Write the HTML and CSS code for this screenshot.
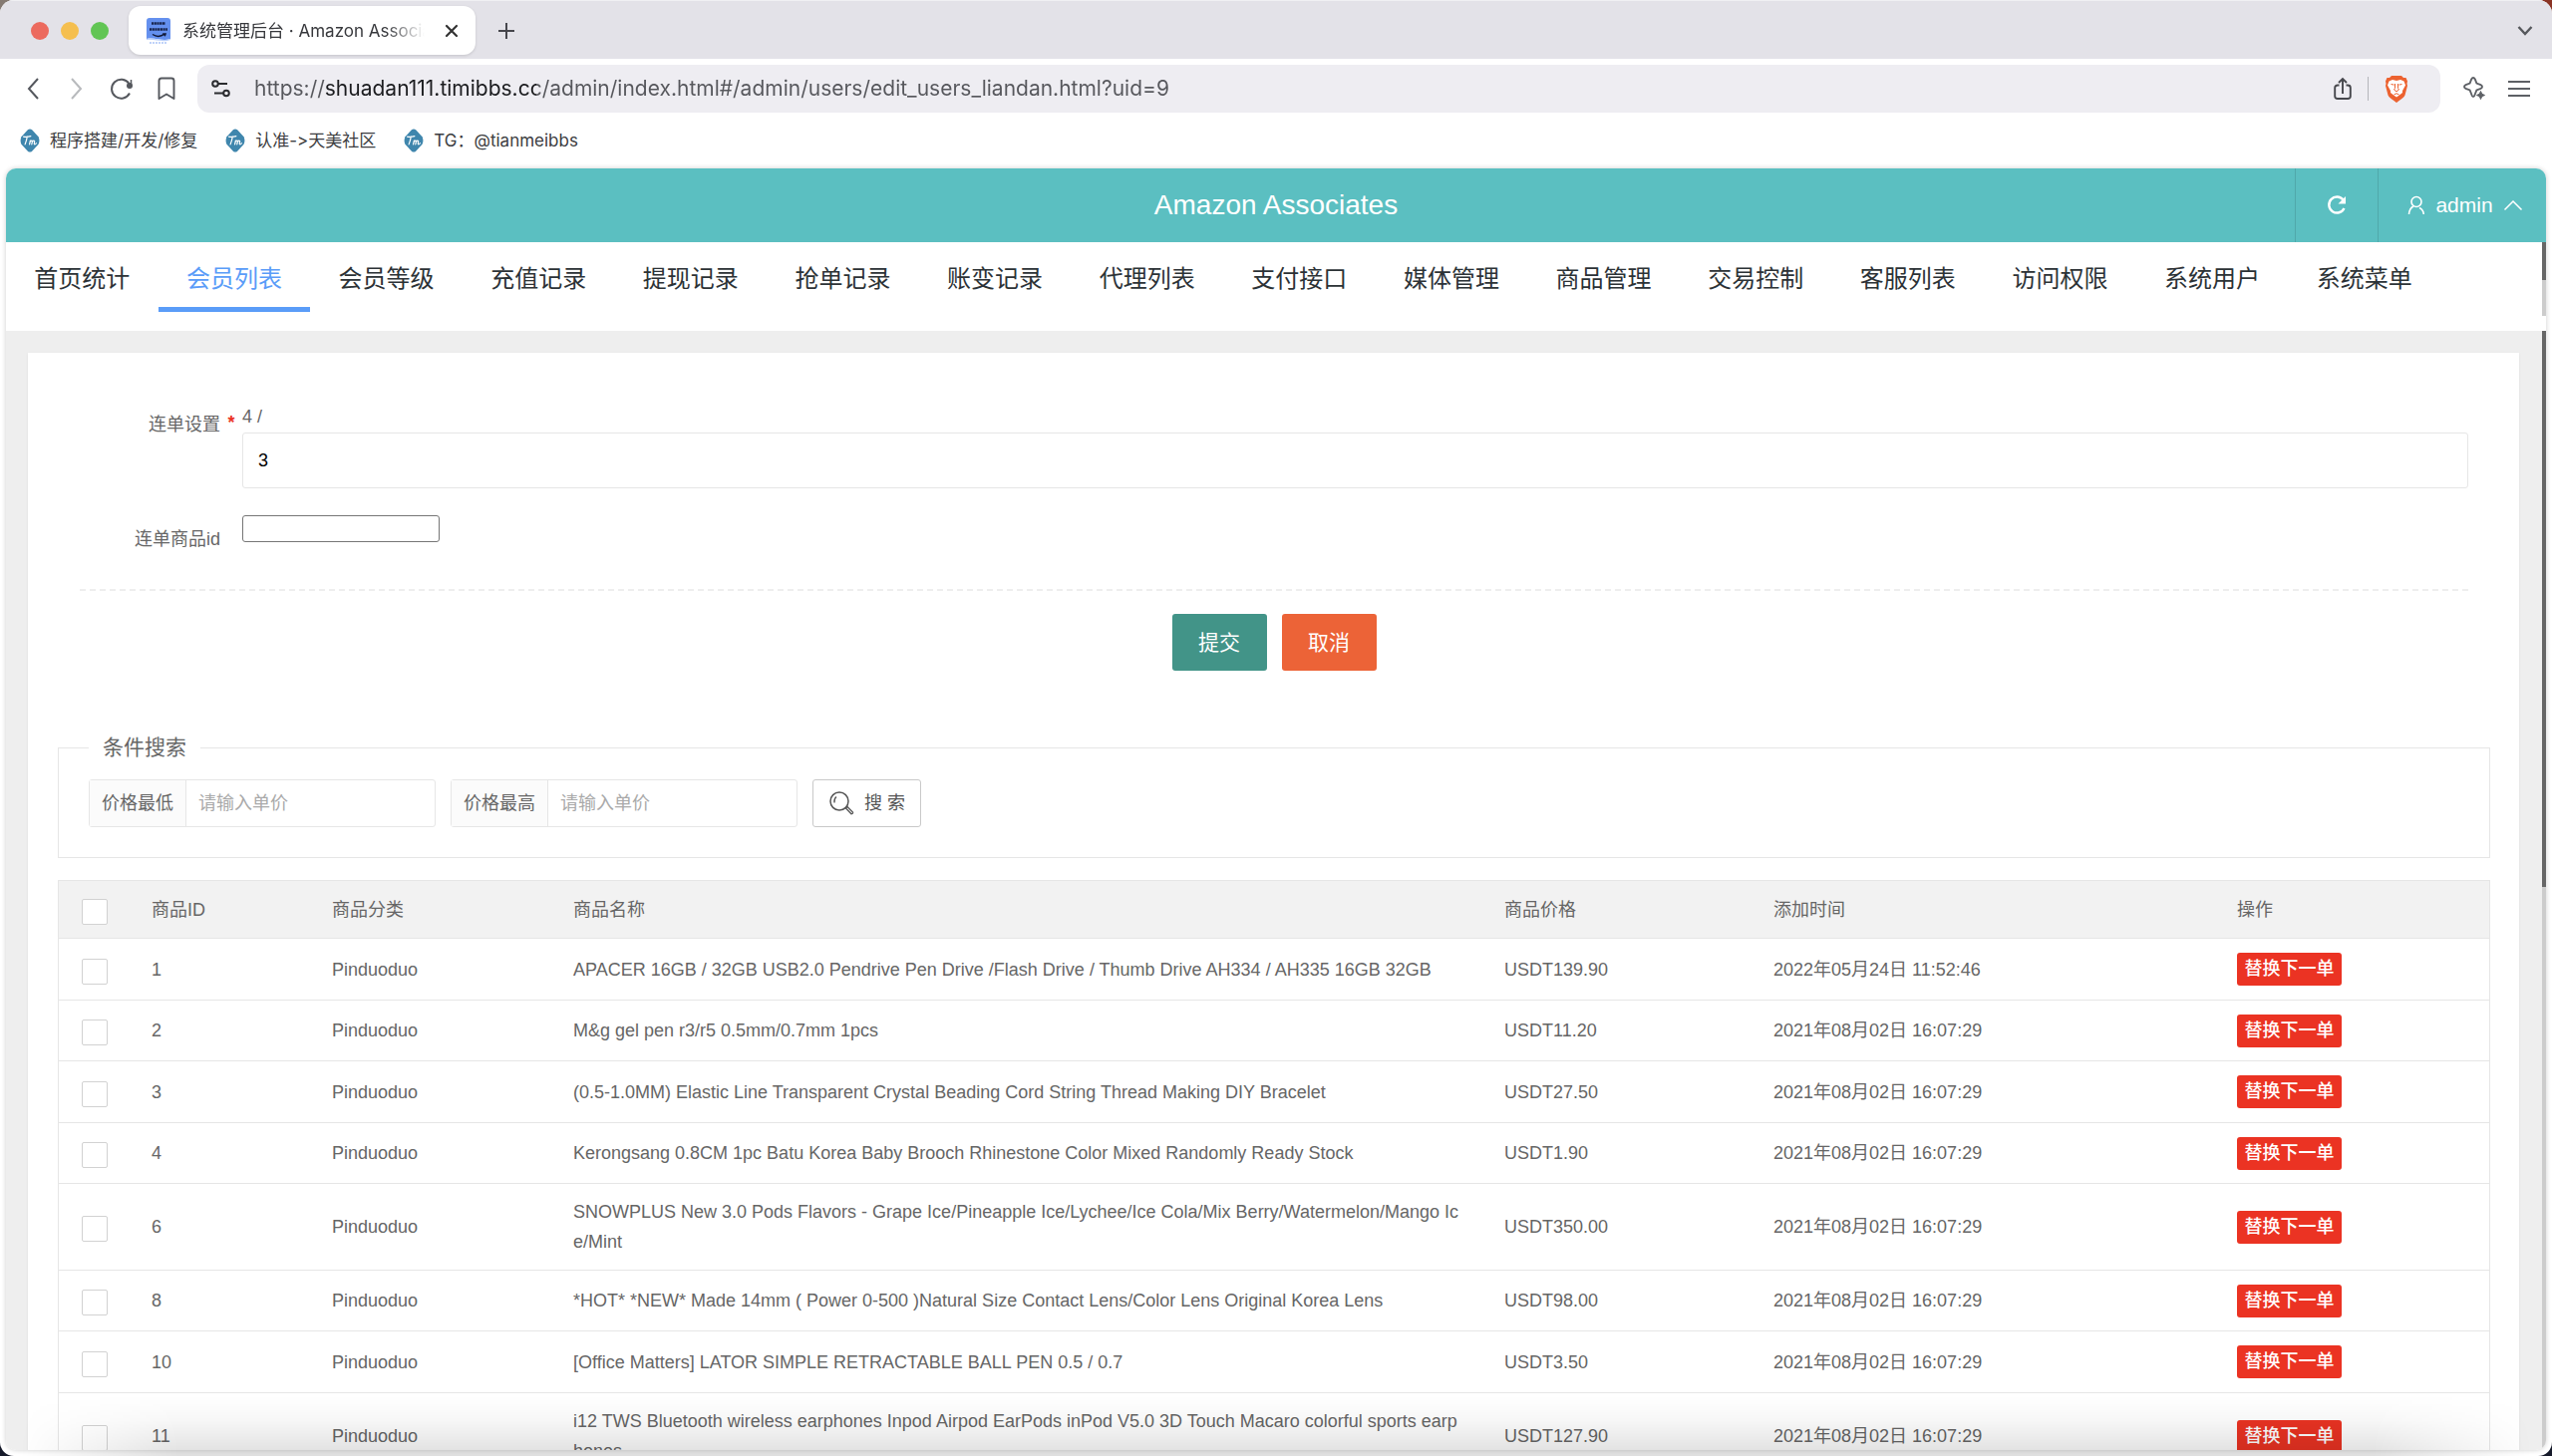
FILE: index.html
```html
<!DOCTYPE html>
<html lang="zh-CN">
<head>
<meta charset="utf-8">
<title>系统管理后台 · Amazon Associates</title>
<link rel="stylesheet" href="styles.css">
</head>
<body>
<svg class="defs" aria-hidden="true">
  <symbol id="tm" viewBox="0 0 24 28">
    <path d="M9.500 1.500Q12-.5 14.500 1.500L22 9.500Q24 14 22 18.500L14.500 26.500Q12 28.500 9.500 26.500L2 18.500Q0 14 2 9.500Z" fill="#3f86ad"/>
    <path d="M4.500 9.500c3 .6 6.500 0 8.500-.6M8.800 9.500c-.5 3.500-1.500 6.500-2.500 9M11.500 18.500l1-4.500M12.300 15.500c1-1.800 2.700-2 2.500-.3l-.7 3.300M14.700 15.700c1-1.900 2.900-2.100 2.700-.3-.1 1.300-.9 3 .2 3.100.8 0 1.400-.6 1.900-1.300" fill="none" stroke="#fff" stroke-width="1.400" stroke-linecap="round" stroke-linejoin="round"/>
  </symbol>
</svg>
<div class="window">
  <header class="tabstrip">
    <div class="lights"><span class="light red"></span><span class="light yellow"></span><span class="light green"></span></div>
    <div class="tab">
      <svg class="favicon" width="24" height="26" viewBox="0 0 24 26">
        <path d="M3 0h18q3 0 3 3v18c-8 3-16-2-24 0V3q0-3 3-3z" fill="#6490ee"/>
        <path d="M0 21c8-2 16 3 24 0v1c-8 3-16-1-24 0z" fill="#b9cffa"/>
        <path d="M5 5.500h14M3 11.500h18" stroke="#18254d" stroke-width="2.400" stroke-dasharray="2.200 .5"/>
        <path d="M6 16.500q6 4 12-.3M16.200 16h2.800l-.8 2.200" fill="none" stroke="#101733" stroke-width="1.500"/>
        <path d="M3 25h18" stroke="#aac3f7" stroke-width="1.500" stroke-dasharray="2 1"/>
      </svg>
      <span class="tab-title">系统管理后台 · Amazon Associates</span>
      <button class="icon-btn" aria-label="关闭标签页"><svg width="14" height="14" viewBox="0 0 14 14"><path d="M2 2l10 10M12 2L2 12" stroke="#333" stroke-width="2.200" stroke-linecap="round"/></svg></button>
    </div>
    <button class="icon-btn new-tab" aria-label="新标签页"><svg width="18" height="18" viewBox="0 0 18 18"><path d="M9 1v16M1 9h16" stroke="#46464c" stroke-width="2"/></svg></button>
    <button class="icon-btn tab-list" aria-label="搜索标签页"><svg width="16" height="12" viewBox="0 0 16 12"><path d="M1.500 2L8 9l6.500-7" fill="none" stroke="#56585c" stroke-width="2.400"/></svg></button>
  </header>

  <div class="toolbar">
    <div class="nav-btns">
      <button class="icon-btn" aria-label="后退"><svg width="14" height="22" viewBox="0 0 14 22"><path d="M12 1L3 11l9 10" fill="none" stroke="#55585e" stroke-width="2"/></svg></button>
      <button class="icon-btn" aria-label="前进"><svg width="14" height="22" viewBox="0 0 14 22"><path d="M2 1l9 10-9 10" fill="none" stroke="#b8babd" stroke-width="2"/></svg></button>
      <button class="icon-btn" aria-label="刷新"><svg width="24" height="24" viewBox="0 0 24 24"><path d="M19.500 7A9.500 9.500 0 1 0 20 16.500" fill="none" stroke="#55585e" stroke-width="2"/><circle cx="20" cy="9" r="3" fill="#55585e"/><path d="M21.500 3v6" stroke="#55585e" stroke-width="1.500"/></svg></button>
      <button class="icon-btn" aria-label="收藏"><svg width="18" height="24" viewBox="0 0 18 24"><path d="M1.500 22V4q0-2.500 2.500-2.500h10q2.500 0 2.500 2.500v18L9 17.500z" fill="none" stroke="#55585e" stroke-width="1.900" stroke-linejoin="round"/></svg></button>
    </div>
    <div class="omnibox">
      <svg width="20" height="18" viewBox="0 0 20 18" fill="none" stroke="#2b2c30" stroke-width="2"><circle cx="4" cy="4" r="2.800"/><path d="M7 4h9M3 13.500h9"/><circle cx="15" cy="13.500" r="2.800"/></svg>
      <input class="url" type="text" aria-label="地址" value="https://shuadan111.timibbs.cc/admin/index.html#/admin/users/edit_users_liandan.html?uid=9">
      <button class="icon-btn" aria-label="分享"><svg width="18" height="24" viewBox="0 0 18 24" fill="none" stroke="#47484d" stroke-width="1.900"><path d="M5.500 8.500H4Q1.200 8.500 1.200 11v8.500Q1.200 22 4 22h10q2.800 0 2.800-2.500V11q0-2.500-2.800-2.500h-1.500M9 17V2.500M5 6l4-4 4 4"/></svg></button>
      <span class="omni-divider"></span>
      <button class="icon-btn" aria-label="Brave Shields"><svg width="24" height="28" viewBox="0 0 24 28">
        <path d="M7 1h10l2 2h2.500L23 6.500 22.500 9 23 11l-2.500 9.500Q20 22 18 23.500L12 28 6 23.500Q4 22 3.500 20.500L1 11l.5-2L1 6.500 2.500 3H5z" fill="#ec6230"/>
        <path d="M4.500 6.500L8 5l4 1 4-1 3.500 1.500 1.500 4-3 5.500v2l-2.500 2L12 22.500 8.500 20 6 18v-2l-3-5.500z" fill="#fff"/>
        <path d="M6.500 9.500l3 .6M17.500 9.500l-3 .6M10.500 9v4.500L9.500 15l2.500 1.800L14.500 15l-1-1.500V9M9.500 20l2.500-1.300 2.500 1.300" fill="none" stroke="#ec6230" stroke-width="1"/>
      </svg></button>
    </div>
    <button class="icon-btn" aria-label="Leo AI"><svg width="24" height="24" viewBox="0 0 24 24"><path d="M9.200 2.500c1-2 2.600-2 3.600 0l1.600 4.100 4.100 1.600c2 1 2 2.600 0 3.600l-4.100 1.600-1.600 4.100c-1 3.500-2.600 3.500-3.600 0l-1.600-4.100-4.100-1.600c-2-1-2-2.600 0-3.600l4.100-1.600z" fill="none" stroke="#5d6065" stroke-width="1.900"/><path d="M18.500 14.500l1.200 2.800 2.800 1.200-2.800 1.200-1.200 2.800-1.200-2.800-2.800-1.200 2.800-1.200z" fill="#5d6065" stroke="#5d6065"/></svg></button>
    <button class="icon-btn" aria-label="菜单"><svg width="22" height="18" viewBox="0 0 22 18"><path d="M0 2h22M0 9h22M0 16h22" stroke="#5d6065" stroke-width="2"/></svg></button>
  </div>

  <nav class="bookmarks" aria-label="书签">
    <a href="#"><svg width="24" height="24"><use href="#tm"/></svg>程序搭建/开发/修复</a>
    <a href="#"><svg width="24" height="24"><use href="#tm"/></svg>认准-&gt;天美社区</a>
    <a href="#"><svg width="24" height="24"><use href="#tm"/></svg>TG：@tianmeibbs</a>
  </nav>

  <main class="page">
    <header class="topbar">
      <h1>Amazon Associates</h1>
      <div class="top-actions">
        <button class="top-btn refresh" aria-label="刷新"><svg width="20" height="20" viewBox="0 0 20 20"><path d="M16.500 4.500A8 8 0 1 0 17.500 13" fill="none" stroke="#fff" stroke-width="2.400"/><path d="M19 1v7.500h-7.500z" fill="#fff"/></svg></button>
        <button class="top-btn user">
          <svg width="18" height="20" viewBox="0 0 18 20" fill="none" stroke="#fff" stroke-width="1.600"><circle cx="9" cy="6.500" r="5"/><path d="M1.500 19Q2 13 6 11M12 12.500Q16 14.500 16.300 19"/></svg>
          admin
          <svg width="20" height="12" viewBox="0 0 20 12"><path d="M1.500 10.500L10 2l8.500 8.500" fill="none" stroke="#fff" stroke-width="1.500"/></svg>
        </button>
      </div>
    </header>

    <nav class="menu" aria-label="主菜单">
      <a href="#">首页统计</a><a href="#" class="active">会员列表</a><a href="#">会员等级</a><a href="#">充值记录</a><a href="#">提现记录</a><a href="#">抢单记录</a><a href="#">账变记录</a><a href="#">代理列表</a><a href="#">支付接口</a><a href="#">媒体管理</a><a href="#">商品管理</a><a href="#">交易控制</a><a href="#">客服列表</a><a href="#">访问权限</a><a href="#">系统用户</a><a href="#">系统菜单</a>
      <span class="scroll menu-scroll"></span>
    </nav>

    <div class="body">
      <span class="scroll body-scroll"></span>
      <section class="card">
        <form class="edit">
          <div class="row">
            <label for="liandan">连单设置</label><span class="star">*</span>
            <div><div class="hint">4 /</div><input class="wide" id="liandan" type="text" value="3"></div>
          </div>
          <div class="row second">
            <label for="goods">连单商品id</label><span></span>
            <div><input class="plain" id="goods" type="text"></div>
          </div>
          <div class="submit">
            <button type="button" class="btn primary">提交</button>
            <button type="button" class="btn cancel">取消</button>
          </div>
        </form>

        <form class="list">
          <fieldset class="search">
            <legend>条件搜索</legend>
            <div class="filters">
              <div class="field"><label for="min">价格最低</label><input id="min" type="text" placeholder="请输入单价"></div>
              <div class="field"><label for="max">价格最高</label><input id="max" type="text" placeholder="请输入单价"></div>
              <button type="button" class="search-btn"><svg width="26" height="26" viewBox="0 0 26 26" fill="none" stroke="#555" stroke-width="1.500"><circle cx="11" cy="11" r="9"/><path d="M6 12.500Q5.500 8.500 8 6.500M17.500 18l1.500-1.500 5.500 5.500q.5 1.500-1.500 1.800z" stroke-width="1.300"/></svg>搜 索</button>
            </div>
          </fieldset>

          <table>
            <colgroup><col class="c-check"><col class="c-id"><col class="c-cat"><col><col class="c-price"><col class="c-time"><col class="c-op"></colgroup>
            <thead><tr><th class="check"><input type="checkbox" aria-label="全选"></th><th>商品ID</th><th>商品分类</th><th>商品名称</th><th>商品价格</th><th>添加时间</th><th>操作</th></tr></thead>
            <tbody>
              <tr><td class="check"><input type="checkbox" aria-label="选择 1"></td><td>1</td><td>Pinduoduo</td><td class="name">APACER 16GB / 32GB USB2.0 Pendrive Pen Drive /Flash Drive / Thumb Drive AH334 / AH335 16GB 32GB</td><td>USDT139.90</td><td>2022年05月24日 11:52:46</td><td><button type="button" class="swap">替换下一单</button></td></tr>
              <tr><td class="check"><input type="checkbox" aria-label="选择 2"></td><td>2</td><td>Pinduoduo</td><td class="name">M&amp;g gel pen r3/r5 0.5mm/0.7mm 1pcs</td><td>USDT11.20</td><td>2021年08月02日 16:07:29</td><td><button type="button" class="swap">替换下一单</button></td></tr>
              <tr><td class="check"><input type="checkbox" aria-label="选择 3"></td><td>3</td><td>Pinduoduo</td><td class="name">(0.5-1.0MM) Elastic Line Transparent Crystal Beading Cord String Thread Making DIY Bracelet</td><td>USDT27.50</td><td>2021年08月02日 16:07:29</td><td><button type="button" class="swap">替换下一单</button></td></tr>
              <tr><td class="check"><input type="checkbox" aria-label="选择 4"></td><td>4</td><td>Pinduoduo</td><td class="name">Kerongsang 0.8CM 1pc Batu Korea Baby Brooch Rhinestone Color Mixed Randomly Ready Stock</td><td>USDT1.90</td><td>2021年08月02日 16:07:29</td><td><button type="button" class="swap">替换下一单</button></td></tr>
              <tr><td class="check"><input type="checkbox" aria-label="选择 6"></td><td>6</td><td>Pinduoduo</td><td class="name">SNOWPLUS New 3.0 Pods Flavors - Grape Ice/Pineapple Ice/Lychee/Ice Cola/Mix Berry/Watermelon/Mango Ice/Mint</td><td>USDT350.00</td><td>2021年08月02日 16:07:29</td><td><button type="button" class="swap">替换下一单</button></td></tr>
              <tr><td class="check"><input type="checkbox" aria-label="选择 8"></td><td>8</td><td>Pinduoduo</td><td class="name">*HOT* *NEW* Made 14mm ( Power 0-500 )Natural Size Contact Lens/Color Lens Original Korea Lens</td><td>USDT98.00</td><td>2021年08月02日 16:07:29</td><td><button type="button" class="swap">替换下一单</button></td></tr>
              <tr><td class="check"><input type="checkbox" aria-label="选择 10"></td><td>10</td><td>Pinduoduo</td><td class="name">[Office Matters] LATOR SIMPLE RETRACTABLE BALL PEN 0.5 / 0.7</td><td>USDT3.50</td><td>2021年08月02日 16:07:29</td><td><button type="button" class="swap">替换下一单</button></td></tr>
              <tr><td class="check"><input type="checkbox" aria-label="选择 11"></td><td>11</td><td>Pinduoduo</td><td class="name">i12 TWS Bluetooth wireless earphones Inpod Airpod EarPods inPod V5.0 3D Touch Macaro colorful sports earphones</td><td>USDT127.90</td><td>2021年08月02日 16:07:29</td><td><button type="button" class="swap">替换下一单</button></td></tr>
            </tbody>
          </table>
        </form>
      </section>
    </div>
  </main>
  <div class="bottom-shade"></div>
</div>
</body>
</html>
```
FILE: styles.css
```css
* { box-sizing: border-box; }

html, body { margin: 0; height: 100%; }

body {
  background: linear-gradient(#0000 50%, #171b2b 50%), linear-gradient(90deg, #857a72 50%, #8a3324 50%);
  font: 18px/30px "Liberation Sans", "Noto Sans CJK SC", sans-serif;
  color: #666;
  overflow: hidden;
}

button, input { font: inherit; color: inherit; margin: 0; }
a { color: inherit; text-decoration: none; }
svg { display: block; flex: none; }

.defs { position: absolute; width: 0; height: 0; }

.window {
  position: relative;
  height: 100vh;
  display: flex;
  flex-direction: column;
  background: #fff;
  border-radius: 14px;
  overflow: hidden;
}

.icon-btn {
  border: 0;
  padding: 0;
  background: none;
  display: flex;
  align-items: center;
  justify-content: center;
}

/* Browser chrome */
.tabstrip, .toolbar, .bookmarks {
  flex: none;
  display: flex;
  align-items: center;
  font-family: Inter, "Noto Sans CJK SC", sans-serif;
  font-variant-ligatures: none;
}

.tabstrip {
  height: 59px;
  padding: 2px 19px 0 31px;
  background: #e3e2e8;
  box-shadow: inset 0 1px #f0f0f3;
}

.lights { display: flex; gap: 12px; }
.light { width: 18px; height: 18px; border-radius: 50%; }
.red { background: #ec6a5e; }
.yellow { background: #f5bf4f; }
.green { background: #61c554; }

.tab {
  width: 348px;
  height: 49px;
  margin-left: 20px;
  padding: 0 17px 0 18px;
  display: flex;
  align-items: center;
  gap: 12px;
  background: #fff;
  border-radius: 12px;
  box-shadow: 0 1px 3px #0002;
}

.tab-title {
  flex: 1;
  margin-right: 8px;
  overflow: hidden;
  white-space: nowrap;
  font-size: 17px;
  color: #37383c;
  mask-image: linear-gradient(90deg, #000 84%, #0000);
}

.new-tab { margin-left: 22px; }
.tab-list { margin-left: auto; }

.toolbar { height: 60px; padding: 0 22px 0 26px; gap: 22px; }
.nav-btns { display: flex; align-items: center; gap: 26px; }
.nav-btns .icon-btn:first-child { margin-right: 4px; }
.nav-btns .icon-btn:last-child { margin-left: -2px; }

.omnibox {
  flex: 1;
  height: 48px;
  padding: 0 32px 0 14px;
  display: flex;
  align-items: center;
  gap: 16px;
  background: #eeedf2;
  border-radius: 12px;
}

.url {
  flex: 1;
  min-width: 0;
  border: 0;
  padding: 0 0 0 7px;
  font-size: 21px;
  background: linear-gradient(90deg, #56575c 78px, #1b1c1f 78px 290px, #56575c 290px);
  background-clip: text;
  color: transparent;
}

.omni-divider { width: 1px; height: 24px; background: #b5b5bb; }

.bookmarks {
  height: 50px;
  padding: 0 18px 6px;
  gap: 26px;
  font-size: 17px;
  color: #3c3d41;
}

.bookmarks a { display: flex; align-items: center; gap: 8px; }

/* Admin page */
.page {
  flex: 1;
  min-height: 0;
  margin: 0 6px 6px;
  display: flex;
  flex-direction: column;
  border-radius: 10px;
  overflow: hidden;
  box-shadow: 0 0 5px #0003;
}

.topbar {
  flex: none;
  height: 74px;
  display: grid;
  grid-template-columns: 1fr auto 1fr;
  align-items: center;
  background: #5bbfc1;
  color: #fff;
}

.topbar h1 { grid-column: 2; margin: 0; font-size: 28px; font-weight: 400; }
.top-actions { display: flex; height: 100%; justify-content: flex-end; }

.top-btn {
  border: 0;
  border-left: 1px solid #50a8aa;
  background: none;
  display: flex;
  align-items: center;
  justify-content: center;
  gap: 10px;
  padding: 0;
  font-size: 21px;
}

.refresh { width: 83px; }
.user { width: 169px; padding-left: 6px; }

.menu {
  flex: none;
  position: relative;
  height: 89px;
  padding-right: 106px;
  display: flex;
  align-items: flex-start;
  background: #fff;
}

.menu a {
  flex: 1;
  height: 70px;
  line-height: 74px;
  text-align: center;
  white-space: nowrap;
  font-size: 24px;
  color: #2c3236;
}

.menu .active { color: #5a9cf8; border-bottom: 5px solid #5a9cf8; }

.scroll { position: absolute; top: 0; right: 0; width: 4px; }
.menu-scroll { height: 74px; background: linear-gradient(#666 38px, #ccc 38px); }
.body-scroll { height: 100%; background: linear-gradient(#666 558px, #ccc 558px); }

.body {
  flex: 1;
  min-height: 0;
  position: relative;
  padding: 22px 27px 0 22px;
  background: #eee;
  overflow: hidden;
}

.card { background: #fff; box-shadow: 0 1px 3px #0001; }

/* Edit form */
.edit { padding: 48px 51px 0 52px; }

.row { display: grid; grid-template-columns: 141px 22px 1fr; }
.row.second { margin-top: 27px; }
.row > label { line-height: 48px; text-align: right; }
.star { line-height: 44px; text-align: center; font-weight: 700; color: #eb3323; }
.hint { line-height: 32px; }

.wide {
  display: block;
  width: 100%;
  height: 56px;
  padding: 0 15px;
  border: 1px solid #e6e6e6;
  border-radius: 3px;
  color: #000;
}

.plain {
  display: block;
  width: 198px;
  height: 27px;
  border: 1px solid #767676;
  border-radius: 3px;
}

.submit {
  margin-top: 26px;
  padding-top: 23px;
  display: flex;
  justify-content: center;
  gap: 15px;
  border-top: 2px dashed #eee;
}

.btn {
  width: 95px;
  height: 57px;
  border: 0;
  border-radius: 3px;
  padding: 0;
  color: #fff;
  font-size: 21px;
}

.primary { background: #429488; }
.cancel { background: #ec6337; }

/* Product list */
.list { padding: 62px 29px 0 30px; }

.search {
  min-width: 0;
  margin: 0 0 22px;
  padding: 17px 30px 30px;
  border: 1px solid #e6e6e6;
}

.search legend { padding: 0 14px; font-size: 21px; }
.filters { display: flex; gap: 15px; }

.field {
  display: flex;
  height: 48px;
  border: 1px solid #e6e6e6;
  border-radius: 3px;
}

.field label {
  width: 97px;
  line-height: 46px;
  text-align: center;
  background: #fbfbfb;
  border-right: 1px solid #e6e6e6;
}

.field input { width: 249px; border: 0; padding: 0 12px; background: none; }
.field input::placeholder { color: #aaa; }

.search-btn {
  width: 109px;
  height: 48px;
  padding: 0;
  display: flex;
  align-items: center;
  justify-content: center;
  gap: 10px;
  background: #fff;
  border: 1px solid #c9c9c9;
  border-radius: 3px;
  color: #555;
}

table {
  width: 100%;
  table-layout: fixed;
  border-collapse: separate;
  border-spacing: 0;
  border: 1px solid #e6e6e6;
  border-bottom: 0;
}

.c-check { width: 75px; }
.c-id { width: 181px; }
.c-cat { width: 242px; }
.c-price { width: 270px; }
.c-time { width: 465px; }
.c-op { width: 271px; }

th, td {
  padding: 0 18px;
  text-align: left;
  vertical-align: middle;
  font-weight: 400;
  border-bottom: 1px solid #e6e6e6;
}

th { height: 58px; background: #f2f2f2; }
td { height: 61px; }
tr:nth-child(odd) td { height: 62px; }
td.name { padding: 13px 23px 13px 18px; word-break: break-all; }
.check { padding: 4px 22px 0 23px; }

.check input {
  appearance: none;
  display: block;
  width: 26px;
  height: 26px;
  background: #fff;
  border: 1px solid #d2d2d2;
  border-radius: 2px;
}

.swap {
  display: block;
  width: 105px;
  height: 33px;
  line-height: 33px;
  padding: 0;
  border: 0;
  border-radius: 3px;
  background: #eb3323;
  color: #fff;
  font-weight: 500;
}

/* Soft shade rising from the bottom edge of the window */
.bottom-shade {
  position: absolute;
  left: 0;
  right: 0;
  bottom: 0;
  height: 60px;
  pointer-events: none;
  background: linear-gradient(#0000, #00000008 40%, #00000020);
  mask-image: linear-gradient(90deg, #0000 20px, #000 180px calc(100% - 180px), #0000 calc(100% - 20px));
}
```
